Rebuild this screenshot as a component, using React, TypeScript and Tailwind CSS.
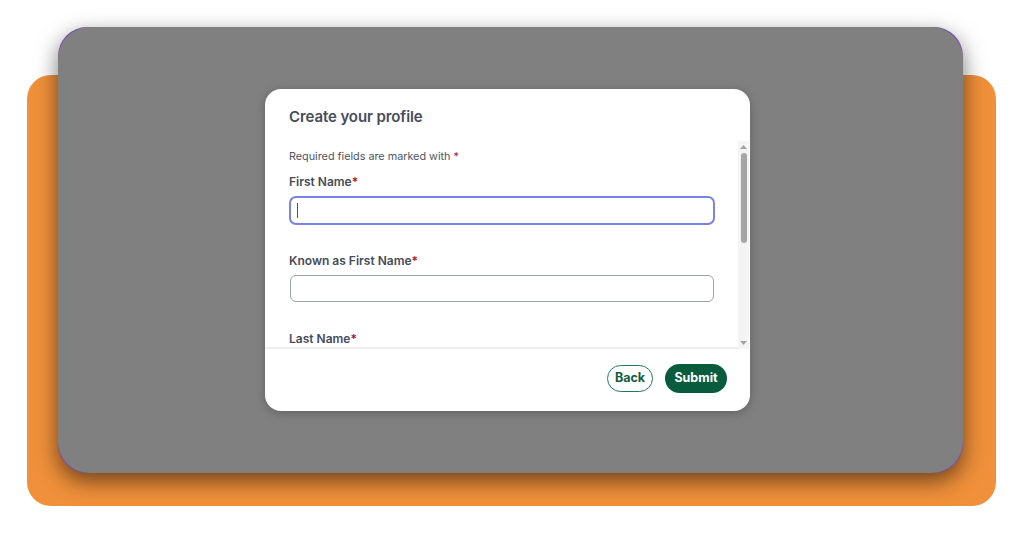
import React from "react";

function Req() {
  return <span className="text-[#a3192e]">*</span>;
}

export default function App() {
  return (
    <div className="w-[1024px] h-[536px] bg-white overflow-hidden pt-[75px] pl-[27px] [font-family:Inter,'Noto_Sans',sans-serif]">
      <div className="relative w-[969px] h-[431px] rounded-[24px] bg-[#f0903a]">
        <div className="absolute left-[31px] top-[-48px] w-[905px] h-[446px] rounded-[29px] bg-[#7a52ae] shadow-[0_8px_22px_rgba(0,0,0,0.55)]">
          <div className="w-full h-full rounded-[32px] bg-[#808080] pt-[62px] pl-[207px]">
            <div className="w-[485px] h-[322px] bg-white rounded-[16px] flex flex-col overflow-hidden shadow-[0_2px_10px_rgba(0,0,0,0.25)]">
              <div className="h-[52px] shrink-0 pl-[24px] pt-[16px]">
                <div className="text-[15px] leading-[24px] font-semibold text-[#474c5a] tracking-[-0.1px]">
                  Create your profile
                </div>
              </div>
              <div className="h-[208px] shrink-0 flex relative">
                <div className="flex-1 overflow-hidden pl-[24px] pr-[23px] pt-[8px]">
                  <div className="text-[10.8px] leading-[16px] text-[#4e5462]">
                    Required fields are marked with <Req />
                  </div>
                  <div className="mt-[9px] text-[12px] leading-[16px] font-semibold text-[#474c5a]">
                    First Name<Req />
                  </div>
                  <div className="mt-[6px] h-[29px] rounded-[7px] border-2 border-[#7b82e6] flex items-center pl-[6px]">
                    <div className="w-px h-[15px] bg-[#555]" />
                  </div>
                  <div className="mt-[28px] text-[12px] leading-[16px] font-semibold text-[#474c5a]">
                    Known as First Name<Req />
                  </div>
                  <div className="mt-[6px] h-[27px] rounded-[6px] border border-[#9ca1ab] mr-[1px] ml-[1px]" />
                  <div className="mt-[29px] text-[12px] leading-[16px] font-semibold text-[#474c5a]">
                    Last Name<Req />
                  </div>
                </div>
                <div className="w-[11px] mr-[1px] bg-[#f4f4f4] flex flex-col items-center">
                  <svg width="7" height="4" viewBox="0 0 7 4" className="mt-[4px]">
                    <path d="M0 4 L3.5 0 L7 4 Z" fill="#a3a3a3" />
                  </svg>
                  <div className="mt-[4px] w-[6px] h-[90px] rounded-full bg-[#a6a6a6]" />
                  <div className="flex-1" />
                  <svg width="7" height="4" viewBox="0 0 7 4" className="mb-[4px]">
                    <path d="M0 0 L3.5 4 L7 0 Z" fill="#a3a3a3" />
                  </svg>
                </div>
                <div className="absolute left-0 right-[12px] bottom-0 h-[2px] bg-[#eeeeee]" />
              </div>
              <div className="flex-1 flex items-center justify-end gap-[12px] pr-[23px] pb-[3px]">
                <button className="h-[27px] w-[46px] rounded-full border border-[#1f7a57] text-[#0f5e40] text-[12.5px] font-bold flex items-center justify-center">
                  Back
                </button>
                <button className="h-[29px] w-[62px] rounded-full bg-[#085c3d] text-white text-[12.5px] font-bold flex items-center justify-center">
                  Submit
                </button>
              </div>
            </div>
          </div>
        </div>
      </div>
    </div>
  );
}
